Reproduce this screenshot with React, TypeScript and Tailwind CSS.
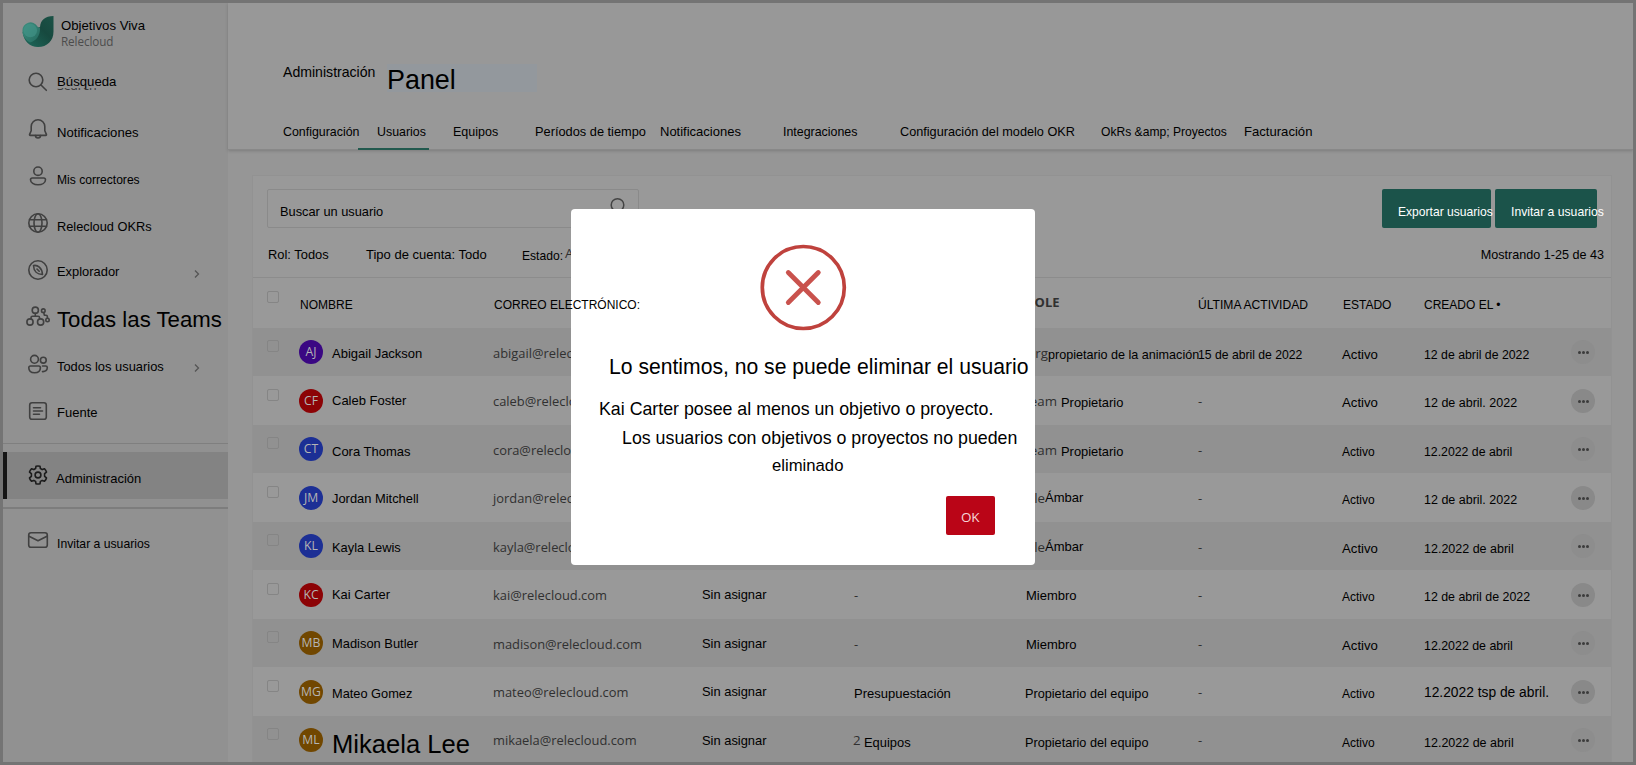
import React from "react";

type LabelProps = { at: string; className?: string; children: React.ReactNode };

/* Single line of text whose baseline sits at the bottom of a strut. */
function Label({ at, className = "text-[13px]", children }: LabelProps) {
  return (
    <span className={`flex h-0 items-baseline whitespace-pre leading-none ${className}`}>
      <i className={`block w-0 shrink-0 ${at}`} />
      <span>{children}</span>
    </span>
  );
}

const SOFT = "font-['Open_Sans',sans-serif] text-[#303030]";

function Icon({ children, dark = false }: { children: React.ReactNode; dark?: boolean }) {
  return (
    <svg
      viewBox="0 0 24 24"
      className={`h-6 w-6 shrink-0 ${dark ? "text-[#1c1c1c]" : "text-[#404040]"}`}
      fill="none"
      stroke="currentColor"
      strokeWidth="1.6"
      strokeLinecap="round"
      strokeLinejoin="round"
    >
      {children}
    </svg>
  );
}

const icons = {
  search: (
    <>
      <circle cx="10" cy="10" r="6.8" />
      <path d="M15 15l5.3 5.3" />
    </>
  ),
  bell: (
    <>
      <path d="M12 2.8a6.8 6.8 0 0 0-6.8 6.8v4.2L3.600 17.400c-.200.500.100 1 .600 1h15.600c.500 0 .800-.500.600-1l-1.600-3.600V9.600A6.800 6.800 0 0 0 12 2.800z" />
      <path d="M9.500 18.500a2.500 2.500 0 0 0 5 0" />
    </>
  ),
  person: (
    <>
      <circle cx="12" cy="7.200" r="4.200" />
      <path d="M6.300 14h11.400c1 0 1.800.800 1.800 1.800 0 3-3.300 5-7.500 5s-7.500-2-7.500-5c0-1 .800-1.800 1.800-1.800z" />
    </>
  ),
  globe: (
    <>
      <circle cx="12" cy="12" r="9.200" />
      <ellipse cx="12" cy="12" rx="4" ry="9.200" />
      <path d="M3.500 8.800h17M3.500 15.200h17" />
    </>
  ),
  compass: (
    <>
      <circle cx="12" cy="12" r="9.200" />
      <path d="M7.500 7.500c4-.800 8.500 2 9 9-5 0-8.800-3-9-9z" />
      <path d="M11 11l2.200 2.200" />
    </>
  ),
  org: (
    <>
      <circle cx="9.300" cy="5.200" r="3.100" />
      <circle cx="4" cy="17" r="3.100" />
      <circle cx="14.600" cy="17" r="3.100" />
      <circle cx="17.300" cy="5.700" r="1.800" />
      <circle cx="21.500" cy="15" r="1.700" />
      <path d="M9.300 8.300v2.900M5 14v-1.300c0-.900.600-1.500 1.500-1.500h5.600c.900 0 1.500.600 1.500 1.500V14M17.800 7.500l.500 2.700h1.700c.900 0 1.400.600 1.400 1.500v1.600" />
    </>
  ),
  users: (
    <>
      <circle cx="8.500" cy="7.300" r="3.900" />
      <circle cx="17.300" cy="8.200" r="2.900" />
      <path d="M4.500 14h8.200c1 0 1.700.700 1.700 1.700 0 3-2.300 5-5.800 5s-5.800-2-5.800-5c0-1 .700-1.700 1.700-1.700z" />
      <path d="M16.500 14h3.200c1 0 1.600.700 1.600 1.600 0 2.600-2 4.200-4.800 4" />
    </>
  ),
  feed: (
    <>
      <rect x="3.700" y="3.700" width="16.600" height="16.600" rx="2.300" />
      <path d="M7.500 8.700h7M7.500 12h9M7.500 15.300h6" />
    </>
  ),
  gear: (
    <>
      <circle cx="12" cy="12" r="2.900" />
      <path d="M10 3.200c1.300-.300 2.700-.300 4 0l.400 2.400c.700.300 1.200.600 1.800 1l2.300-.900c.900 1 1.600 2.100 2 3.400l-1.900 1.600v2.600l1.900 1.600c-.400 1.300-1.100 2.400-2 3.400l-2.300-.900c-.600.400-1.100.700-1.800 1l-.400 2.400c-1.300.300-2.700.300-4 0l-.400-2.400c-.700-.300-1.200-.600-1.800-1l-2.300.900c-.900-1-1.600-2.100-2-3.400l1.900-1.600v-2.600L3.500 9.100c.400-1.300 1.100-2.400 2-3.400l2.300.900c.600-.400 1.100-.700 1.800-1z" />
    </>
  ),
  mail: (
    <>
      <rect x="2.700" y="4.700" width="18.600" height="14.600" rx="2.300" />
      <path d="M3 8.300l9 4.500 9-4.500" />
    </>
  ),
};

const nav = [
  { icon: icons.search, text: "Búsqueda", at: "h-[26px]", cls: "text-[13.2px]", ghost: "Search" },
  { icon: icons.bell, text: "Notificaciones", at: "h-[30px]", cls: "text-[13.1px]" },
  { icon: icons.person, text: "Mis correctores", at: "h-[30px]", cls: "text-[12.1px]" },
  { icon: icons.globe, text: "Relecloud OKRs", at: "h-[30px]", cls: "text-[12.8px]" },
  { icon: icons.compass, text: "Explorador", at: "h-[28px]", cls: "text-[12.9px]", more: true },
  { icon: icons.org, text: "Todas las Teams", at: "h-[32px]", cls: "text-[22.2px]" },
  { icon: icons.users, text: "Todos los usuarios", at: "h-[29px]", cls: "text-[12.9px]", more: true },
  { icon: icons.feed, text: "Fuente", at: "h-[28px]", cls: "text-[13px]" },
];

function Logo() {
  return (
    <svg viewBox="0 0 32 32" className="h-8 w-8">
      <defs>
        <linearGradient id="leaf" x1="0" y1="1" x2="1" y2="0">
          <stop offset="0" stopColor="#1e6a5c" />
          <stop offset=".6" stopColor="#17493f" />
          <stop offset="1" stopColor="#1b5246" />
        </linearGradient>
        <linearGradient id="bud" x1="0" y1="0" x2="1" y2="1">
          <stop offset="0" stopColor="#3f8f80" />
          <stop offset="1" stopColor="#236a5e" />
        </linearGradient>
      </defs>
      <path d="M31.500 0v15.500C31.500 25 25 31 16 31 8 31 1.500 25 .600 16L18 11C18.500 4 23 0 31.500 0z" fill="url(#leaf)" />
      <path d="M.500 15a8 8 0 0 1 15-4.500c1 1.500 1.600 2 2.500 .5 .500 8-3 13.500-10 15.500C3 23.500 .300 19 .500 15z" fill="url(#bud)" />
      <circle cx="8.300" cy="14.500" r="6.800" fill="#45968a" opacity=".6" />
    </svg>
  );
}

function Sidebar() {
  return (
    <aside className="flex w-[225px] shrink-0 flex-col bg-[#919191]">
      <div className="flex h-[57px] pl-[19px] pt-[13px]">
        <Logo />
        <div className="pl-[7px]">
          <Label at="h-[14px]" className="text-[13.2px]">Objetivos Viva</Label>
          <Label at="h-[30px]" className="font-['Open_Sans',sans-serif] text-[11.7px] tracking-[-0.1px] text-[#4c4c4c]">
            Relecloud
          </Label>
        </div>
      </div>
      {nav.map((n) => (
        <div key={n.text} className="flex h-[47px] shrink-0 pl-[23px]">
          <div className="flex h-full items-center pb-[3px]"><Icon>{n.icon}</Icon></div>
          <div className="w-[142px] pl-[7px]">
            <Label at={n.at} className={n.cls}>{n.text}</Label>
            {n.ghost && (
              <div className="mt-[28px] flex h-[3px] items-end overflow-hidden">
                <span className="-mb-[2px] font-['Open_Sans',sans-serif] text-[12.500px] leading-[14px] text-[#3a3a3a]">
                  {n.ghost}
                </span>
              </div>
            )}
          </div>
          {n.more && (
            <svg viewBox="0 0 8 10" className="ml-[1px] mt-[21px] h-[10px] w-[8px]" fill="none" stroke="#555" strokeWidth="1.300">
              <path d="M2 1.500L5.500 5 2 8.500" />
            </svg>
          )}
        </div>
      ))}
      <div className="mt-[7px] h-px shrink-0 bg-[#7f7f7f]" />
      <div className="mt-[8px] flex h-[47px] shrink-0 border-l-[4px] border-[#161616] bg-[#838383] pl-[19px]">
        <div className="flex h-full items-center pb-px"><Icon dark>{icons.gear}</Icon></div>
        <div className="pl-[6px]"><Label at="h-[31px]" className="text-[13px]">Administración</Label></div>
      </div>
      <div className="mt-[8px] h-[2px] shrink-0 bg-[#7d7d7d]" />
      <div className="mt-[8px] flex h-[47px] shrink-0 pl-[23px]">
        <div className="flex h-full items-center pb-[2px]"><Icon>{icons.mail}</Icon></div>
        <div className="pl-[7px]"><Label at="h-[31px]" className="text-[12.200px]">Invitar a usuarios</Label></div>
      </div>
    </aside>
  );
}

const tabs = [
  ["Configuración", "text-[12.4px]"],
  ["Usuarios", "text-[12.4px]"],
  ["Equipos", "text-[12.5px]"],
  ["Períodos de tiempo", "text-[12.8px]"],
  ["Notificaciones", "text-[13px]"],
  ["Integraciones", "text-[12.4px]"],
  ["Configuración del modelo OKR", "text-[12.7px]"],
  ["OkRs &amp; Proyectos", "text-[12.1px]"],
  ["Facturación", "text-[13.1px]"],
];

function Header() {
  return (
    <header className="h-[147px] shrink-0 border-b border-[#888] bg-[#989898] pl-[55px] shadow-[0_1px_3px_rgba(0,0,0,0.18)]">
      <div className="flex h-[104px]">
        <div className="w-[104px]"><Label at="h-[74px]" className="text-[14.1px]">Administración</Label></div>
        <div className="mt-[61px] h-[28px] w-[150px] bg-[#93989d]">
          <Label at="h-[25px]" className="text-[26.900px]">Panel</Label>
        </div>
      </div>
      <nav className="grid h-[43px] grid-cols-[94px_76px_82px_125px_123px_117px_201px_143px_auto]">
        {tabs.map(([text, cls], i) => (
          <div key={text} className="relative">
            <Label at="h-[29px]" className={cls}>{text}</Label>
            {i === 1 && <div className="absolute -left-[19px] bottom-0 h-[2px] w-[71px] bg-[#22594e]" />}
          </div>
        ))}
      </nav>
    </header>
  );
}

const COLS =
  "grid grid-cols-[33px_33px_161px_209px_152px_172px_172px_144px_82px_147px_24px] pl-[13px]";

type Cell = [string, string, string];
type Row = {
  initials: string;
  color: string;
  name: Cell;
  email: [string, string];
  manager?: string;
  team?: React.ReactNode;
  role: React.ReactNode;
  last: React.ReactNode;
  status: [string, string];
  created: Cell;
};

const MED = "text-[13.2px]";
const SML = "text-[12px]";
const dash = (at: string) => <Label at={at} className={`text-[13px] ${SOFT}`}>-</Label>;

const partial = (soft: string, softAt: string, text: string, at: string, gap: string, cls: string) => (
  <div className="flex">
    <div className={`flex justify-end ${gap}`}>
      <Label at={softAt} className={`text-[13.3px] ${SOFT}`}>{soft}</Label>
    </div>
    <Label at={at} className={cls}>{text}</Label>
  </div>
);

const rows: Row[] = [
  {
    initials: "AJ", color: "bg-[#3a0783]",
    name: ["Abigail Jackson", "h-[30px]", "text-[13px]"],
    email: ["abigail@relecloud.com", "h-[30px]"],
    role: partial("Org", "h-[30px]", "propietario de la animación", "h-[31px]", "w-[22px]", "text-[12.6px]"),
    last: <Label at="h-[31px]" className="text-[12.2px]">15 de abril de 2022</Label>,
    status: ["h-[31px]", MED],
    created: ["12 de abril de 2022", "h-[31px]", "text-[12.3px]"],
  },
  {
    initials: "CF", color: "bg-[#8c0306]",
    name: ["Caleb Foster", "h-[29px]", "text-[13px]"],
    email: ["caleb@relecloud.com", "h-[30px]"],
    role: partial("Team", "h-[30px]", "Propietario", "h-[31px]", "w-[31px] mr-[4px]", "text-[12.9px]"),
    last: dash("h-[30px]"),
    status: ["h-[31px]", MED],
    created: ["12 de abril. 2022", "h-[31px]", "text-[12.5px]"],
  },
  {
    initials: "CT", color: "bg-[#1c2f95]",
    name: ["Cora Thomas", "h-[31px]", "text-[13px]"],
    email: ["cora@relecloud.com", "h-[30px]"],
    role: partial("Team", "h-[30px]", "Propietario", "h-[31px]", "w-[31px] mr-[4px]", "text-[12.9px]"),
    last: dash("h-[30px]"),
    status: ["h-[31px]", SML],
    created: ["12.2022 de abril", "h-[31px]", "text-[12.3px]"],
  },
  {
    initials: "JM", color: "bg-[#1c2f95]",
    name: ["Jordan Mitchell", "h-[30px]", "text-[12.9px]"],
    email: ["jordan@relecloud.com", "h-[30px]"],
    role: partial("le", "h-[30px]", "Ámbar", "h-[29px]", "w-[19px]", "text-[13px]"),
    last: dash("h-[30px]"),
    status: ["h-[31px]", SML],
    created: ["12 de abril. 2022", "h-[31px]", "text-[12.5px]"],
  },
  {
    initials: "KL", color: "bg-[#1c2f95]",
    name: ["Kayla Lewis", "h-[30px]", "text-[12.9px]"],
    email: ["kayla@relecloud.com", "h-[30px]"],
    role: partial("le", "h-[30px]", "Ámbar", "h-[29px]", "w-[19px]", "text-[13px]"),
    last: dash("h-[30px]"),
    status: ["h-[31px]", MED],
    created: ["12.2022 de abril", "h-[31px]", "text-[12.500px]"],
  },
  {
    initials: "KC", color: "bg-[#8c0306]",
    name: ["Kai Carter", "h-[29px]", "text-[12.9px]"],
    email: ["kai@relecloud.com", "h-[30px]"],
    manager: "h-[29px]",
    team: dash("h-[30px]"),
    role: <Label at="h-[30px]" className="text-[13px]">Miembro</Label>,
    last: dash("h-[30px]"),
    status: ["h-[31px]", SML],
    created: ["12 de abril de 2022", "h-[31px]", "text-[12.4px]"],
  },
  {
    initials: "MB", color: "bg-[#714700]",
    name: ["Madison Butler", "h-[29px]", "text-[12.9px]"],
    email: ["madison@relecloud.com", "h-[30px]"],
    manager: "h-[29px]",
    team: dash("h-[30px]"),
    role: <Label at="h-[30px]" className="text-[13px]">Miembro</Label>,
    last: dash("h-[30px]"),
    status: ["h-[31px]", MED],
    created: ["12.2022 de abril", "h-[31px]", "text-[12.4px]"],
  },
  {
    initials: "MG", color: "bg-[#714700]",
    name: ["Mateo Gomez", "h-[31px]", "text-[12.8px]"],
    email: ["mateo@relecloud.com", "h-[30px]"],
    manager: "h-[29px]",
    team: <Label at="h-[31px]" className="text-[13px]">Presupuestación</Label>,
    role: <div className="-ml-px"><Label at="h-[31px]" className="text-[12.7px]">Propietario del equipo</Label></div>,
    last: dash("h-[30px]"),
    status: ["h-[31px]", SML],
    created: ["12.2022 tsp de abril.", "h-[30px]", "text-[13.8px]"],
  },
  {
    initials: "ML", color: "bg-[#714700]",
    name: ["Mikaela Lee", "h-[37px]", "text-[25.600px]"],
    email: ["mikaela@relecloud.com", "h-[29px]"],
    manager: "h-[29px]",
    team: (
      <div className="flex">
        <div className="-ml-px w-[11px]"><Label at="h-[29px]" className={`text-[13.3px] ${SOFT}`}>2</Label></div>
        <Label at="h-[31px]" className="text-[12.9px]">Equipos</Label>
      </div>
    ),
    role: <div className="-ml-px"><Label at="h-[31px]" className="text-[12.7px]">Propietario del equipo</Label></div>,
    last: dash("h-[29px]"),
    status: ["h-[31px]", SML],
    created: ["12.2022 de abril", "h-[31px]", "text-[12.500px]"],
  },
];

function Check({ top }: { top: string }) {
  return <div className={`ml-px h-[12px] w-[12px] rounded-[2px] border border-[#858585] ${top}`} />;
}

function TableRow({ row, striped }: { row: Row; striped: boolean }) {
  const top = striped ? "mt-[12px]" : "mt-[13px]";
  return (
    <div className={`${COLS} shrink-0 ${striped ? "h-[48px] bg-[#919191]" : "h-[49px]"}`}>
      <Check top={top} />
      <div className={`${top} flex h-[24px] w-[24px] items-center justify-center rounded-full font-['Open_Sans',sans-serif] text-[12.200px] leading-none text-[#b4b4b4] ${row.color}`}>
        {row.initials}
      </div>
      <Label at={row.name[1]} className={row.name[2]}>{row.name[0]}</Label>
      <Label at={row.email[1]} className={`text-[12.900px] ${SOFT}`}>{row.email[0]}</Label>
      <div>{row.manager && <Label at={row.manager} className="text-[12.900px]">Sin asignar</Label>}</div>
      <div>{row.team}</div>
      <div>{row.role}</div>
      <div>{row.last}</div>
      <Label at={row.status[0]} className={row.status[1]}>Activo</Label>
      <Label at={row.created[1]} className={row.created[2]}>{row.created[0]}</Label>
      <div className={`${top} flex h-[24px] w-[24px] items-center justify-center gap-px rounded-full ${striped ? "bg-[#8d8d8d]" : "bg-[#898989]"}`}>
        <i className="h-[3px] w-[3px] rounded-full bg-[#3c3c3c]" />
        <i className="h-[3px] w-[3px] rounded-full bg-[#3c3c3c]" />
        <i className="h-[3px] w-[3px] rounded-full bg-[#3c3c3c]" />
      </div>
    </div>
  );
}

function UsersCard() {
  return (
    <section className="ml-[24px] mt-[25px] flex w-[1360px] flex-col border border-[#929292] bg-[#999]">
      <div className="flex h-[52px] shrink-0 justify-between pl-[14px] pr-[14px] pt-[13px]">
        <div className="flex h-[39px] w-[372px] justify-between rounded-[2px] border border-[#8a8a8a] pl-[12px] pr-[12px]">
          <Label at="h-[26px]" className="text-[12.800px]">Buscar un usuario</Label>
          <svg viewBox="0 0 20 20" className="mt-[7px] h-5 w-5" fill="none" stroke="#444" strokeWidth="1.500" strokeLinecap="round">
            <circle cx="11.500" cy="8" r="6.300" />
            <path d="M7 12.500l-5 5" />
          </svg>
        </div>
        <div className="flex gap-[4px] text-white">
          <div className="h-[39px] w-[109px] rounded-[2px] bg-[#1b534a] pl-[16px]">
            <Label at="h-[27px]" className="text-[12.1px]">Exportar usuarios</Label>
          </div>
          <div className="h-[39px] w-[102px] rounded-[2px] bg-[#1b534a] pl-[16px]">
            <Label at="h-[27px]" className="text-[12.2px]">Invitar a usuarios</Label>
          </div>
        </div>
      </div>
      <div className="flex h-[49px] shrink-0 pl-[15px] pr-[7px]">
        <div className="w-[98px]"><Label at="h-[31px]" className="text-[12.9px]">Rol: Todos</Label></div>
        <div className="w-[156px]"><Label at="h-[31px]" className="text-[13px]">Tipo de cuenta: Todo</Label></div>
        <div className="w-[43px]"><Label at="h-[32px]" className="text-[12.100px]">Estado:</Label></div>
        <Label at="h-[30px]" className={`text-[13.3px] ${SOFT}`}>All</Label>
        <div className="ml-auto"><Label at="h-[31px]" className="text-[12.600px]">Mostrando 1-25 de 43</Label></div>
      </div>
      <div className={`${COLS} h-[51px] shrink-0 border-t border-[#8c8c8c] text-[12px]`}>
        <Check top="mt-[13px]" />
        <div className="col-span-2 pl-px"><Label at="h-[31px]" className="text-[12px]">NOMBRE</Label></div>
        <div className="relative z-20 pl-px"><Label at="h-[31px]" className="text-[12px]">CORREO ELECTRÓNICO:</Label></div>
        <div />
        <div />
        <Label at="h-[29px]" className={`text-[13px] font-bold ${SOFT}`}>ROLE</Label>
        <Label at="h-[31px]" className="text-[12.1px]">ÚLTIMA ACTIVIDAD</Label>
        <div className="pl-px"><Label at="h-[31px]" className="text-[12px]">ESTADO</Label></div>
        <Label at="h-[31px]" className="text-[12px]">CREADO EL •</Label>
      </div>
      {rows.map((row, i) => (
        <TableRow key={row.initials} row={row} striped={i % 2 === 0} />
      ))}
    </section>
  );
}

function ErrorDialog() {
  return (
    <div
      role="dialog"
      className="absolute left-[568px] top-[206px] z-10 flex h-[356px] w-[464px] flex-col rounded-[4px] bg-white"
    >
      <svg viewBox="0 0 88 88" className="ml-[188px] mt-[34px] h-[88px] w-[88px]" fill="none">
        <circle cx="44.300" cy="44.500" r="41" stroke="#bf423d" strokeWidth="3.700" />
        <path d="M29.300 29.500l30 30M59.300 29.500l-30 30" stroke="#c9524d" strokeWidth="4.800" strokeLinecap="round" />
      </svg>
      <div className="h-[165px]">
        <div className="pl-[38px]">
          <Label at="h-[43px]" className="text-[21.150px]">Lo sentimos, no se puede eliminar el usuario</Label>
        </div>
        <div className="pl-[28px]">
          <Label at="h-[84px]" className="text-[17.800px]">Kai Carter posee al menos un objetivo o proyecto.</Label>
        </div>
        <div className="pl-[51px]">
          <Label at="h-[113px]" className="text-[17.800px]">Los usuarios con objetivos o proyectos no pueden</Label>
        </div>
        <div className="pl-[201px]">
          <Label at="h-[140px]" className="text-[16.700px]">eliminado</Label>
        </div>
      </div>
      <button className="ml-[375px] h-[39px] w-[49px] rounded-[2px] bg-[#ba0517] pl-[15px] text-[#f6d5d8]">
        <span className="flex h-full items-start">
          <Label at="h-[26px]" className="font-['Open_Sans',sans-serif] text-[13.500px] tracking-[-0.2px]">OK</Label>
        </span>
      </button>
    </div>
  );
}

export default function App() {
  return (
    <div className="relative flex h-[765px] w-[1636px] overflow-hidden border-[3px] border-[#747474] bg-[#969696] font-['Liberation_Sans',Arial,sans-serif] text-black">
      <Sidebar />
      <main className="flex min-w-0 flex-1 flex-col">
        <Header />
        <UsersCard />
      </main>
      <ErrorDialog />
    </div>
  );
}
